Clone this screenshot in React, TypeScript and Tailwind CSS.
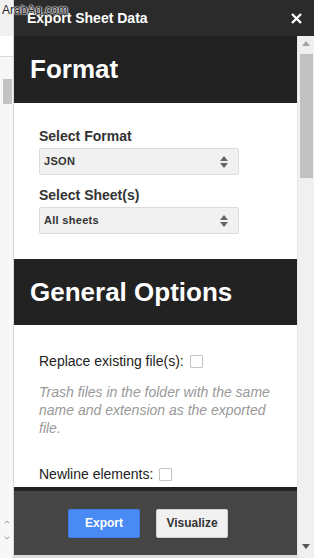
import { ChevronDown, ChevronUp } from "lucide-react";

function SelectBox({ value }: { value: string }) {
  return (
    <div className="flex h-[27px] w-[200px] items-center justify-between rounded-[2px] border border-[#dcdcdc] bg-[#f1f1f1] pl-[4px] pr-[10px]">
      <span className="text-[11px] font-bold tracking-[0.3px] text-[#333]">{value}</span>
      <svg width="8" height="12" viewBox="0 0 8 12">
        <path d="M4 0 L8 5 L0 5 Z" fill="#666" />
        <path d="M0 7 L8 7 L4 12 Z" fill="#666" />
      </svg>
    </div>
  );
}

function Checkbox() {
  return <span className="inline-block h-[13px] w-[13px] rounded-[1px] border border-[#c4c4c4] bg-white" />;
}

export default function App() {
  return (
    <div
      className="relative flex h-[558px] w-[314px] overflow-hidden bg-white"
      style={{ fontFamily: '"Liberation Sans", Arial, sans-serif' }}
    >
      {/* background sheet strip */}
      <div className="flex w-[14px] flex-col border-r border-[#d6d6d6] bg-[#f7f7f7]">
        <div className="h-[36px] bg-[#f1f1f1]" />
        <div className="h-[21px] border-b border-[#d9d9d9] bg-white" />
        <div className="flex flex-1 flex-col px-[3px] pt-[22px]">
          <div className="h-[25px] w-[9px] bg-[#c4c4c4]" />
          <div className="flex-1" />
          <div className="flex flex-col items-center gap-[8px] pb-[16px] text-[#999]">
            <ChevronUp size={8} strokeWidth={3} />
            <ChevronDown size={8} strokeWidth={3} />
          </div>
        </div>
      </div>

      {/* dialog */}
      <div className="flex flex-1 flex-col">
        <div className="flex h-[36px] items-center justify-between bg-[#2b2b2b] pl-[13px] pr-[12px]">
          <span className="text-[14px] font-bold text-white">Export Sheet Data</span>
          <svg width="11" height="11" viewBox="0 0 11 11">
            <path d="M1 1 L10 10 M10 1 L1 10" stroke="white" strokeWidth="2.4" />
          </svg>
        </div>

        <div className="flex flex-1 overflow-hidden">
          <div className="flex flex-1 flex-col">
            <div className="flex-1 overflow-hidden bg-white">
              <div className="flex h-[67px] items-center bg-[#222] pl-[16px]">
                <h1 className="text-[26px] font-bold text-white">Format</h1>
              </div>
              <div className="flex flex-col px-[25px] pt-[25px] pb-[25px]">
                <label className="mb-[4px] text-[14px] font-bold leading-[16px] text-[#333]">Select Format</label>
                <SelectBox value="JSON" />
                <label className="mb-[4px] mt-[12px] text-[14px] font-bold leading-[16px] text-[#333]">Select Sheet(s)</label>
                <SelectBox value="All sheets" />
              </div>
              <div className="flex h-[66px] items-center bg-[#222] pl-[16px]">
                <h1 className="text-[26px] font-bold text-white">General Options</h1>
              </div>
              <div className="flex flex-col px-[25px] pt-[27px]">
                <div className="flex items-center gap-[6px] text-[14px] leading-[18px] text-[#222]">
                  <span>Replace existing file(s):</span>
                  <Checkbox />
                </div>
                <p className="mt-[13px] w-[232px] text-[14px] italic leading-[18px] text-[#999]">
                  Trash files in the folder with the same name and extension as the exported file.
                </p>
                <div className="mt-[28px] flex items-center gap-[6px] text-[14px] leading-[18px] text-[#222]">
                  <span>Newline elements:</span>
                  <Checkbox />
                </div>
              </div>
            </div>
            <div className="flex h-[68px] items-center gap-[16px] border-t-[4px] border-[#222] bg-[#454545] pl-[54px]">
              <button className="h-[29px] w-[72px] rounded-[2px] border border-[#3f7ee8] bg-[#4a8af4] text-[12px] font-bold text-white">
                Export
              </button>
              <button className="h-[29px] w-[72px] rounded-[2px] border border-[#d0d0d0] bg-[#f1f1f1] text-[12px] font-bold text-[#333]">
                Visualize
              </button>
            </div>
            <div className="h-[3px] bg-[#dcdcdc]" />
          </div>

          {/* scrollbar */}
          <div className="flex w-[17px] flex-col items-center border-l border-[#e6e6e6] bg-[#f0f0f0]">
            <svg className="mt-[5px]" width="8" height="5" viewBox="0 0 8 5">
              <path d="M4 0 L8 5 L0 5 Z" fill="#a3a3a3" />
            </svg>
            <div className="mt-[8px] h-[124px] w-[13px] bg-[#c1c1c1]" />
            <div className="flex-1" />
            <svg className="mb-[9px]" width="8" height="5" viewBox="0 0 8 5">
              <path d="M0 0 L8 0 L4 5 Z" fill="#555" />
            </svg>
          </div>
        </div>
      </div>

      {/* watermark */}
      <span className="absolute left-[2px] top-[3px] z-10 text-[12px] leading-[14px] text-[#222] [text-shadow:0_0_2px_#fff,0_0_2px_#fff,0_0_1px_#fff]">
        ArabAq.com
      </span>
    </div>
  );
}
